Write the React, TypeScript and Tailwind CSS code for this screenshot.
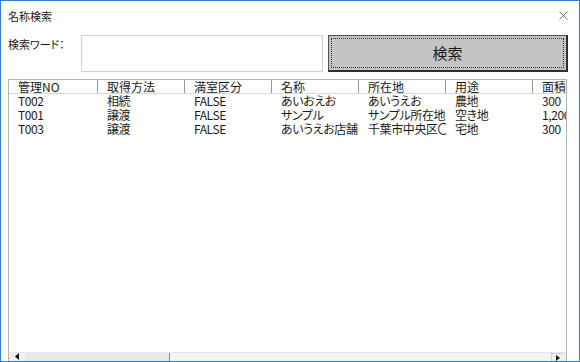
import { X } from 'lucide-react';

type Row = {
  no: string;
  method: string;
  vacancy: string;
  name: string;
  address: string;
  usage: string;
  area: string;
};

const columns = [
  { label: '管理NO', key: 'no', width: 'w-[89px]' },
  { label: '取得方法', key: 'method', width: 'w-[87px]' },
  { label: '満室区分', key: 'vacancy', width: 'w-[87px]' },
  { label: '名称', key: 'name', width: 'w-[87px]' },
  { label: '所在地', key: 'address', width: 'w-[87px]' },
  { label: '用途', key: 'usage', width: 'w-[87px]' },
  { label: '面積', key: 'area', width: 'w-[87px]' },
] as const;

const rows: Row[] = [
  { no: 'T002', method: '相続', vacancy: 'FALSE', name: 'あいおえお', address: 'あいうえお', usage: '農地', area: '300' },
  { no: 'T001', method: '譲渡', vacancy: 'FALSE', name: 'サンプル', address: 'サンプル所在地', usage: '空き地', area: '1,200' },
  { no: 'T003', method: '譲渡', vacancy: 'FALSE', name: 'あいうえお店舗', address: '千葉市中央区〇〇', usage: '宅地', area: '300' },
];

const font = { fontFamily: '"Noto Sans CJK JP", "Noto Sans", sans-serif' };

export default function App() {
  return (
    <div
      className="w-[580px] h-[362px] bg-white border border-[#2b7bd3] flex flex-col overflow-hidden text-[#1a1a1a] [font-feature-settings:'palt']"
      style={font}
    >
      {/* title bar */}
      <div className="h-[28px] flex items-center justify-between pl-[7px] pr-[7px] shrink-0">
        <span className="text-[11px] leading-[12px] mt-[1px]">名称検索</span>
        <X size={15} strokeWidth={1} className="text-[#222] mr-[1px]" />
      </div>

      {/* search row */}
      <div className="flex items-start mt-[6px] pl-[7px] shrink-0">
        <span className="w-[73px] text-[11px] leading-[12px] pt-[3px]">検索ワード：</span>
        <div className="w-[242px] h-[37px] border border-[#cfcfcf] bg-white" />
        <button className="ml-[5px] w-[240px] h-[37px] bg-[#c4c4c4] border border-[#505050] border-b-2 border-r-2 border-b-[#303030] border-r-[#303030] p-[2px]">
          <div className="h-full w-full border border-dotted border-[#333] flex items-center justify-center text-[15px] leading-[16px]">
            検索
          </div>
        </button>
      </div>

      {/* list view */}
      <div className="mt-[7px] ml-[7px] w-[559px] flex-1 border border-[#b4b4b4] border-b-0 flex flex-col overflow-hidden">
        <div className="flex h-[14px] border-b border-[#d8d8d8] shrink-0">
          {columns.map((c) => (
            <div
              key={c.key}
              className={`${c.width} shrink-0 border-r border-[#9a9a9a] pl-[9px] text-[12px] leading-[14px] whitespace-nowrap overflow-hidden`}
            >
              {c.label}
            </div>
          ))}
        </div>
        {rows.map((r) => (
          <div key={r.no} className="flex h-[14px] shrink-0">
            {columns.map((c) => (
              <div
                key={c.key}
                className={`${c.width} shrink-0 pl-[9px] pr-[1px] text-[12px] leading-[14px] tracking-[-0.4px] whitespace-nowrap overflow-hidden`}
              >
                {r[c.key]}
              </div>
            ))}
          </div>
        ))}
        <div className="flex-1" />

        {/* horizontal scrollbar, cut by the window edge */}
        <div className="h-[9px] flex bg-[#f0f0f0] border-t border-[#e6e6e6] shrink-0">
          <div className="w-[16px] flex items-end justify-center pb-[1px]">
            <svg width="5" height="7" viewBox="0 0 5 7">
              <polygon points="4,0 0,3.5 4,7" fill="#111" />
            </svg>
          </div>
          <div className="w-[145px] bg-[#e8e8e8] border-r border-[#8a8a8a]" />
          <div className="flex-1 bg-[#f4f4f4]" />
          <div className="w-[13px] border-l border-t border-[#cfcfcf] bg-[#f0f0f0] flex items-end justify-center">
            <svg width="4" height="6" viewBox="0 0 4 6">
              <polygon points="0,0 4,3 0,6" fill="#111" />
            </svg>
          </div>
          <div className="w-[2px] bg-[#f0f0f0]" />
        </div>
      </div>
    </div>
  );
}
